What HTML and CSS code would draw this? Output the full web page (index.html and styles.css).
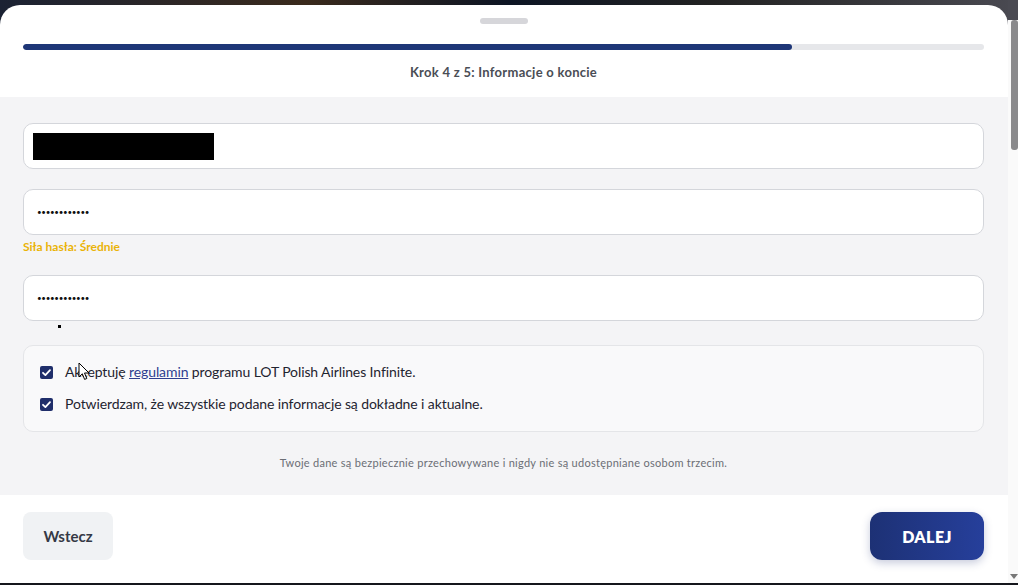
FILE: index.html
```html
<!DOCTYPE html>
<html lang="pl">
<head>
<meta charset="utf-8">
<title>Krok 4 z 5</title>
<link rel="stylesheet" href="styles.css">
</head>
<body>
<div class="screen">
  <div class="sheet">
    <header class="sheet-head">
      <div class="handle"></div>
      <div class="progress"><div class="progress-fill" style="width:80%"></div></div>
      <h1 class="step-title">Krok 4 z 5: Informacje o koncie</h1>
    </header>
    <main class="sheet-body">
      <div class="field"><div class="input"><span class="redacted"></span></div></div>
      <div class="field field-strength">
        <div class="input"><span class="dots">••••••••••••</span></div>
        <p class="strength">Siła hasła: Średnie</p>
      </div>
      <div class="field field-last">
        <div class="input"><span class="dots">••••••••••••</span></div>
        <span class="speck"></span>
      </div>
      <div class="consents">
        <label class="consent">
          <span class="check"><svg viewBox="0 0 13 13" width="13" height="13"><path d="M3 6.8 5.4 9.1 10 4.2" fill="none" stroke="#fff" stroke-width="1.8" stroke-linecap="round" stroke-linejoin="round"/></svg></span>
          <span>Akceptuję <a href="#" class="link">regulamin</a> programu LOT Polish Airlines Infinite.</span>
        </label>
        <label class="consent">
          <span class="check"><svg viewBox="0 0 13 13" width="13" height="13"><path d="M3 6.8 5.4 9.1 10 4.2" fill="none" stroke="#fff" stroke-width="1.8" stroke-linecap="round" stroke-linejoin="round"/></svg></span>
          <span>Potwierdzam, że wszystkie podane informacje są dokładne i aktualne.</span>
        </label>
        <svg class="cursor" viewBox="0 0 12 19" width="12" height="19"><path d="M1 1 L1 15 L4.3 11.8 L6.6 17.4 L8.8 16.5 L6.5 11 L11 11 Z" fill="#fff" stroke="#000" stroke-width="1" stroke-linejoin="round"/></svg>
      </div>
      <p class="note">Twoje dane są bezpiecznie przechowywane i nigdy nie są udostępniane osobom trzecim.</p>
    </main>
    <footer class="sheet-foot">
      <button class="btn btn-back">Wstecz</button>
      <button class="btn btn-next">DALEJ</button>
    </footer>
  </div>
  <div class="scrollbar">
    <div class="scroll-top"></div>
    <div class="scroll-thumb"></div>
    <div class="scroll-track"></div>
    <div class="scroll-arrow"></div>
  </div>
</div>
</body>
</html>
```

FILE: styles.css
```css
* { box-sizing: border-box; }
html, body { margin: 0; padding: 0; }
body {
  width: 1018px;
  height: 585px;
  overflow: hidden;
  background: #15161c;
  font-family: "Lato", "Noto Sans", sans-serif;
  color: #1f2937;
}
.screen {
  display: flex;
  height: 583px;
  background: linear-gradient(90deg, #1b2233 0%, #3a2a1c 30%, #0d1524 50%, #222 70%, #4a4a52 100%);
}
.sheet {
  flex: 1;
  margin-top: 5px;
  background: #fff;
  border-radius: 20px 20px 0 0;
  display: flex;
  flex-direction: column;
  overflow: hidden;
}
.sheet-head {
  padding: 13px 24px 17px 23px;
  display: flex;
  flex-direction: column;
  align-items: center;
}
.handle {
  width: 48px;
  height: 6px;
  border-radius: 3px;
  background: #d6d6da;
  margin-bottom: 20px;
}
.progress {
  width: 100%;
  height: 6px;
  border-radius: 3px;
  background: #e6e7ea;
  overflow: hidden;
}
.progress-fill {
  height: 100%;
  background: #1e3677;
  border-radius: 3px;
}
.step-title {
  margin: 14px 0 0;
  font-size: 13px;
  line-height: 16px;
  font-weight: 700;
  letter-spacing: 0.28px;
  color: #4a4d55;
}
.sheet-body {
  flex: 1;
  background: #f4f4f6;
  padding: 26px 24px 0 23px;
  display: flex;
  flex-direction: column;
}
.field { margin-bottom: 20px; position: relative; }
.field-strength { margin-bottom: 21px; }
.field-last { margin-bottom: 24px; }
.input {
  height: 46px;
  background: #fff;
  border: 1px solid #d4d6db;
  border-radius: 10px;
  display: flex;
  align-items: center;
  padding: 0 13px;
}
.redacted {
  display: block;
  width: 181px;
  height: 27px;
  background: #000;
  margin-left: -4px;
}
.dots {
  font-size: 8px;
  letter-spacing: -0.3px;
  color: #111;
  line-height: 1;
}
.strength {
  margin: 5px 0 0;
  font-size: 12px;
  line-height: 14px;
  font-weight: 700;
  color: #eab308;
}
.speck {
  position: absolute;
  left: 35px;
  top: 50px;
  width: 3px;
  height: 3px;
  background: #000;
}
.consents {
  position: relative;
  background: #f9f9fa;
  border: 1px solid #e4e5e8;
  border-radius: 10px;
  padding: 16px 16px 17px 16px;
  display: flex;
  flex-direction: column;
  gap: 12px;
}
.consent {
  display: flex;
  align-items: center;
  gap: 12px;
  font-size: 14px;
  line-height: 20px;
  color: #1f2430;
  letter-spacing: -0.1px;
}
.check {
  width: 13px;
  height: 13px;
  border-radius: 2px;
  background: #1f2e6a;
  display: flex;
}
.link { color: #2f3f90; text-decoration: underline; }
.cursor {
  position: absolute;
  left: 54px;
  top: 16px;
}
.note {
  margin: 24px 0 0;
  text-align: center;
  font-size: 11px;
  line-height: 14px;
  letter-spacing: 0.28px;
  color: #6b6e75;
}
.sheet-foot {
  padding: 17px 24px 23px 23px;
  display: flex;
  justify-content: space-between;
  background: #fff;
}
.btn {
  height: 48px;
  border: 0;
  font-family: inherit;
  font-size: 15px;
  cursor: pointer;
}
.btn-back {
  width: 90px;
  background: #f0f2f4;
  border-radius: 8px;
  color: #353945;
  font-weight: 700;
}
.btn-next {
  width: 114px;
  border-radius: 12px;
  background: linear-gradient(90deg, #1d3175 0%, #263f9b 100%);
  color: #fff;
  font-weight: 800;
  font-size: 16px;
  letter-spacing: 0.4px;
  box-shadow: 0 3px 8px rgba(30, 49, 117, 0.25);
}
.scrollbar {
  width: 10px;
  display: flex;
  flex-direction: column;
  background: #fafafa;
}
.scroll-top { height: 20px; background: #4a4a52; }
.scroll-thumb {
  height: 130px;
  width: 7px;
  margin-left: 3px;
  background: #8a8a8c;
  border-radius: 3px;
}
.scroll-track { flex: 1; }
.scroll-arrow {
  width: 0;
  height: 0;
  margin: 0 0 4px 2px;
  border-left: 4px solid transparent;
  border-right: 4px solid transparent;
  border-top: 5px solid #777;
}
```
